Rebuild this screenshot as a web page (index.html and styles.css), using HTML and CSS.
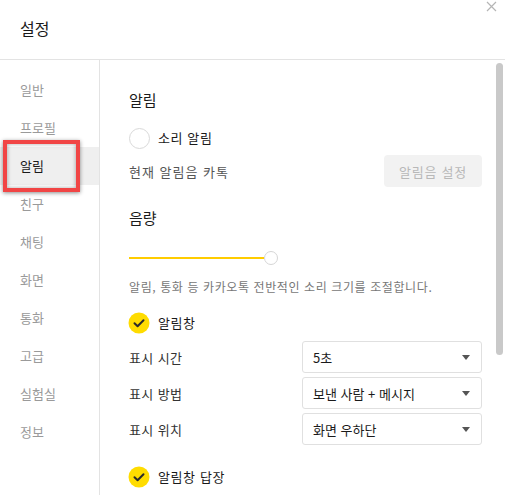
FILE: index.html
```html
<!DOCTYPE html>
<html lang="ko">
<head>
<meta charset="utf-8">
<link rel="stylesheet" href="styles.css">
</head>
<body>
<div class="window">
  <header class="header">
    <h1 class="title">설정</h1>
    <button class="close" aria-label="닫기">
      <svg width="11" height="11" viewBox="0 0 11 11"><path d="M1 1L10 10M10 1L1 10" stroke="#b5b5b5" stroke-width="1.2" fill="none"/></svg>
    </button>
  </header>
  <div class="main">
    <nav class="sidebar">
      <div class="nav-item">일반</div>
      <div class="nav-item">프로필</div>
      <div class="nav-item active">알림</div>
      <div class="nav-item">친구</div>
      <div class="nav-item">채팅</div>
      <div class="nav-item">화면</div>
      <div class="nav-item">통화</div>
      <div class="nav-item">고급</div>
      <div class="nav-item">실험실</div>
      <div class="nav-item">정보</div>
    </nav>
    <div class="highlight"></div>
    <section class="content">
      <div class="pane">
        <h2 class="heading">알림</h2>
        <div class="option radio-row">
          <span class="radio"></span>
          <span class="option-label">소리 알림</span>
        </div>
        <div class="sound-row">
          <span class="sound-text">현재 알림음 카톡</span>
          <button class="sound-btn">알림음 설정</button>
        </div>
        <h2 class="heading volume">음량</h2>
        <div class="slider">
          <span class="track"></span>
          <span class="knob"></span>
        </div>
        <p class="desc">알림, 통화 등 카카오톡 전반적인 소리 크기를 조절합니다.</p>
        <div class="option check-row">
          <span class="check"><svg width="22" height="22" viewBox="0 0 22 22"><circle cx="11" cy="11" r="10.5" fill="#ffdc00"/><path d="M6.5 11.2L9.6 14.2L15.5 8.3" stroke="#2a2a2a" stroke-width="2" fill="none" stroke-linecap="round" stroke-linejoin="round"/></svg></span>
          <span class="option-label">알림창</span>
        </div>
        <div class="fields">
          <div class="field">
            <span class="field-label">표시 시간</span>
            <div class="select"><span>5초</span><span class="arrow"></span></div>
          </div>
          <div class="field">
            <span class="field-label">표시 방법</span>
            <div class="select"><span>보낸 사람 + 메시지</span><span class="arrow"></span></div>
          </div>
          <div class="field">
            <span class="field-label">표시 위치</span>
            <div class="select"><span>화면 우하단</span><span class="arrow"></span></div>
          </div>
        </div>
        <div class="option check-row reply">
          <span class="check"><svg width="22" height="22" viewBox="0 0 22 22"><circle cx="11" cy="11" r="10.5" fill="#ffdc00"/><path d="M6.5 11.2L9.6 14.2L15.5 8.3" stroke="#2a2a2a" stroke-width="2" fill="none" stroke-linecap="round" stroke-linejoin="round"/></svg></span>
          <span class="option-label">알림창 답장</span>
        </div>
      </div>
      <div class="scrollbar"><div class="thumb"></div></div>
    </section>
  </div>
</div>
</body>
</html>
```

FILE: styles.css
```css
* { box-sizing: border-box; }
html, body {
  margin: 0;
  padding: 0;
  background: #fff;
}
body {
  width: 505px;
  height: 495px;
  overflow: hidden;
  font-family: "Noto Sans CJK KR", "Noto Sans", sans-serif;
  color: #222;
}
.window {
  position: relative;
  width: 505px;
  height: 495px;
}
.header {
  height: 60px;
  border-bottom: 1px solid #e3e3e3;
  display: flex;
  align-items: center;
  padding: 0 0 0 20px;
}
.title {
  margin: 0 0 4px 0;
  font-size: 16px;
  font-weight: 400;
  line-height: 22px;
  color: #1a1a1a;
}
.close {
  position: absolute;
  top: 0;
  right: 7px;
  width: 13px;
  height: 13px;
  padding: 0;
  border: 0;
  background: none;
  display: flex;
  align-items: center;
  justify-content: center;
}
.main {
  position: relative;
  display: flex;
  height: 435px;
}
.sidebar {
  width: 100px;
  border-right: 1px solid #e3e3e3;
  padding-top: 11px;
}
.nav-item {
  height: 38px;
  line-height: 38px;
  padding-left: 20px;
  font-size: 13px;
  color: #9a9a9a;
}
.nav-item.active {
  background: #efefef;
  color: #1a1a1a;
}
.highlight {
  position: absolute;
  left: 3px;
  top: 80px;
  width: 77px;
  height: 52px;
  border: 4px solid #f14545;
  box-shadow: 0 1px 4px rgba(0,0,0,0.45), inset 0 0 4px rgba(0,0,0,0.35);
}
.content {
  flex: 1;
  display: flex;
}
.pane {
  flex: 1;
  padding: 28px 14px 0 29px;
  display: flex;
  flex-direction: column;
}
.heading {
  margin: 0;
  font-size: 15px;
  font-weight: 400;
  line-height: 24px;
  color: #1a1a1a;
}
.option {
  display: flex;
  align-items: center;
  height: 22px;
  gap: 8px;
}
.option-label {
  font-size: 13px;
  letter-spacing: 0.6px;
  color: #1a1a1a;
  line-height: 22px;
}
.radio-row { margin-top: 15px; }
.radio {
  width: 21px;
  height: 21px;
  border-radius: 50%;
  border: 1px solid #d9d9d9;
  background: #fff;
}
.sound-row {
  margin-top: 6px;
  height: 32px;
  display: flex;
  align-items: center;
  justify-content: space-between;
}
.sound-text {
  font-size: 13px;
  letter-spacing: 1px;
  color: #555;
}
.sound-btn {
  width: 98px;
  height: 32px;
  border: 0;
  border-radius: 4px;
  background: #f2f2f2;
  color: #b8b8b8;
  font-family: inherit;
  font-size: 13px;
  letter-spacing: 0.8px;
  padding: 0;
}
.heading.volume { margin-top: 19px; }
.slider {
  margin-top: 21px;
  width: 149px;
  height: 14px;
  display: flex;
  align-items: center;
}
.track {
  flex: 1;
  height: 2px;
  background: #ffcc00;
}
.knob {
  width: 14px;
  height: 14px;
  border-radius: 50%;
  border: 1px solid #d6d6d6;
  background: #fff;
}
.desc {
  margin: 13px 0 0 0;
  font-size: 12px;
  letter-spacing: 0.6px;
  line-height: 18px;
  color: #777;
}
.check-row { margin-top: 16px; }
.check {
  width: 22px;
  height: 22px;
  display: flex;
  margin-left: -1px;
}
.fields {
  margin-top: 7px;
  display: flex;
  flex-direction: column;
  gap: 4px;
}
.field {
  display: flex;
  align-items: center;
  justify-content: space-between;
  height: 32px;
}
.field-label {
  font-size: 13px;
  letter-spacing: 0.4px;
  color: #333;
}
.select {
  width: 180px;
  height: 32px;
  border: 1px solid #e0e0e0;
  border-radius: 3px;
  display: flex;
  align-items: center;
  justify-content: space-between;
  padding: 0 10px 0 10px;
  font-size: 13px;
  color: #1a1a1a;
}
.arrow {
  width: 0;
  height: 0;
  border-left: 4px solid transparent;
  border-right: 4px solid transparent;
  border-top: 5px solid #555;
  margin-right: 1px;
}
.check-row.reply { margin-top: 21px; }
.scrollbar {
  width: 7px;
  margin-right: 2px;
  padding-top: 3px;
}
.thumb {
  width: 7px;
  height: 292px;
  border-radius: 4px;
  background: #c9c9c9;
}
```
